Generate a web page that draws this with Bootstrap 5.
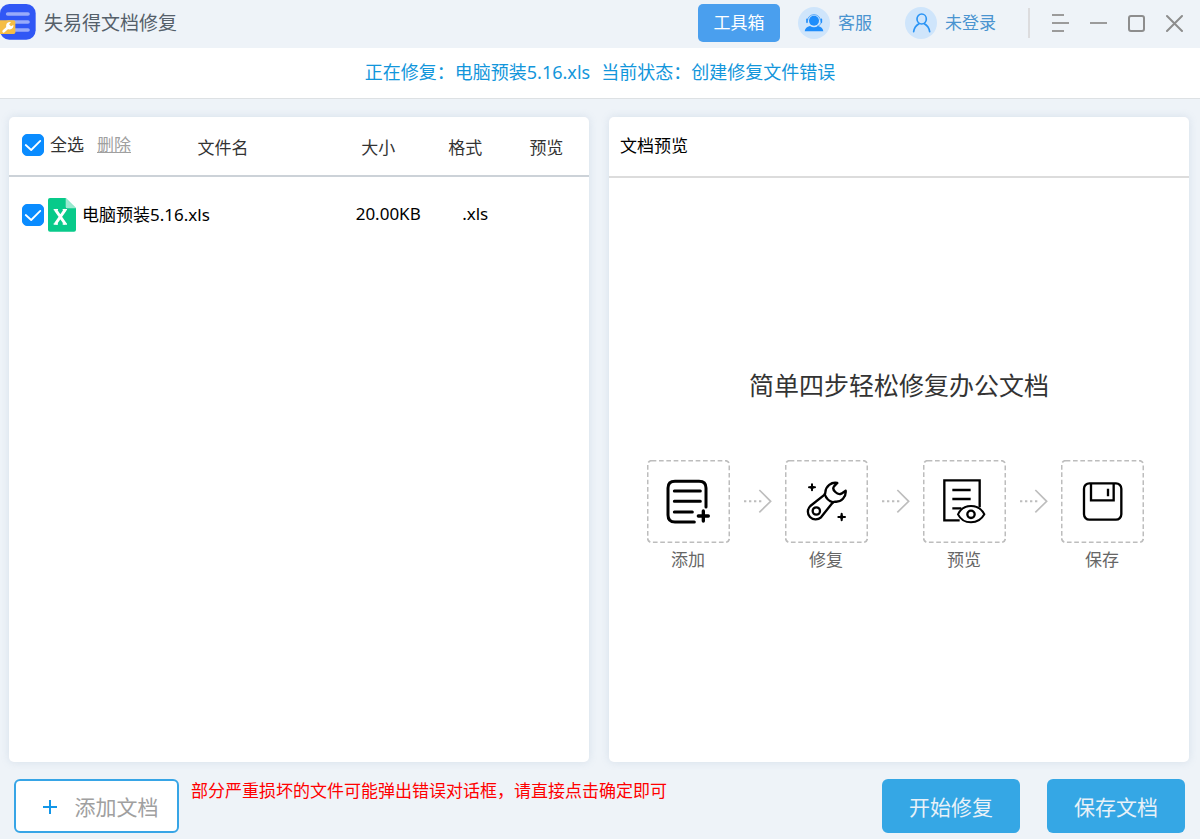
<!DOCTYPE html>
<html lang="zh-CN">
<head>
<meta charset="utf-8">
<meta name="viewport" content="width=device-width, initial-scale=1">
<title>失易得文档修复</title>
<link href="https://cdn.jsdelivr.net/npm/bootstrap@5.3.0/dist/css/bootstrap.min.css" rel="stylesheet">
<style>
  body {
    font-family: "Noto Sans", "Noto Sans CJK SC", sans-serif;
    font-size: 17px;
    line-height: 24px;
    color: #000;
    background: #eef3f8;
  }
  a, a:hover { color: inherit; }
  .title-bar { height: 48px; padding: 0 6px 2px 0; }
  .app-logo { margin-bottom: 2px; }
  .app-name { font-size: 19px; color: #55606a; font-weight: 400; }
  .btn { font-size: 17px; line-height: 24px; }
  .btn-toolbox, .btn-toolbox:hover {
    width: 82px; height: 38px; padding: 0; border: 0; border-radius: 5px;
    background: #4a9fee; color: #fff;
  }
  .bar-link { color: #4a94d0; margin-left: 33px; }
  .btn-toolbox + .bar-link { margin-left: 18px; }
  .bar-link:hover { color: #2a7fc4; }
  .bar-rule { width: 2px; height: 30px; margin: 0 12px 0 32px; background: #dcdcde; }
  .win-btn { width: 38px; height: 38px; padding: 0; border: 0; background: none; line-height: 0; }
  .status-bar { height: 51px; padding-bottom: 2px; gap: 11px; font-size: 18px; color: #1296db; background: #fff; border-bottom: 1px solid #dde1e4; }
  .work-area { padding: 18px 11px 0 9px; gap: 20px; }
  .panel { background: #fff; border-radius: 5px; box-shadow: 0 0 8px rgba(120, 150, 180, .2); flex: 1 1 0; min-width: 0; }
  .file-table { table-layout: fixed; width: 100%; }
  .file-table th { height: 59px; font-weight: 400; color: #333; padding: 3px 4px 0 0; text-align: center; border-bottom: 2px solid #ccd2d8; }
  .file-table th:first-child, .file-table td:first-child { padding: 0 0 3px 13px; text-align: left; }
  .file-table th:nth-child(2) { text-align: left; padding-left: 26px; }
  .file-table td { height: 76px; padding: 0 0 2px 16px; text-align: center; }
  .file-table td:first-child { padding-bottom: 0; }
  .form-check-input.tick { width: 22px; height: 22px; margin: 0; border-radius: 5px; flex: none; }
  .form-check-input.tick:checked { background-color: #0a8cff; border-color: #0a8cff;
    background-image: url("data:image/svg+xml,%3csvg xmlns='http://www.w3.org/2000/svg' viewBox='0 0 22 22'%3e%3cpath fill='none' stroke='%23fff' stroke-width='2' stroke-linecap='round' stroke-linejoin='round' d='M3 11l6 5.500 10-10'/%3e%3c/svg%3e"); }
  .all-label { margin: 0 13px 0 6px; }
  .file-icon { margin-right: 6px; }
  .remove-link, .remove-link:hover { color: #a0a0a0; }
  .panel-head { height: 61px; padding: 0 11px 2px; border-bottom: 2px solid #dcdcdc; }
  .guide { padding-bottom: 3px; }
  .guide-title { font-size: 25px; line-height: 38px; font-weight: 400; color: #333; margin-bottom: 56px; }
  .step-box { width: 83px; height: 83px; }
  .step-arrow { width: 55px; height: 83px; }
  .step-label { color: #666; margin-top: 5px; }
  .steps { padding-right: 8px; }
  .bottom-bar { height: 77px; padding: 0 15px 0 14px; }
  .btn-add, .btn-add:hover {
    width: 165px; height: 54px; padding: 2px 0 0 8px; font-size: 21px; color: #a0a0a0;
    background: #fff; border: 2px solid #37a5e6; border-radius: 6px; gap: 17px;
  }
  .btn-main, .btn-main:hover {
    width: 138px; height: 54px; padding: 2px 0 0; font-size: 21px; color: #e8f1f8;
    background: #35a7e5; border: 0; border-radius: 6px;
  }
  .bottom-bar .btn { margin-top: 11px; }
  .btn-main + .btn-main { margin-left: 27px; }
  .notice { color: #f00; margin: 0 auto 20px 12px; }
</style>
</head>
<body class="d-flex flex-column min-vh-100">

<header class="title-bar d-flex align-items-center flex-shrink-0">
  <svg class="app-logo" width="36" height="36" viewBox="0 0 108 108" aria-hidden="true">
    <rect x="0" y="0" width="107" height="107" rx="28" fill="#3057f5"/>
    <g stroke="#98abfa" stroke-width="11" stroke-linecap="round"><path d="M23 30H84M23 54H84M23 78H84"/></g>
    <rect x="-6" y="49" width="52" height="41" rx="5" fill="#f5bd45"/>
    <path d="M11 82L25 69" stroke="#fff" stroke-width="8" stroke-linecap="round"/>
    <path d="M33 55a11 11 0 1 0 7 8l-7 4-6-6z" fill="#fff"/>
  </svg>
  <h1 class="app-name mb-0 ms-2 me-auto">失易得文档修复</h1>

  <button type="button" class="btn btn-toolbox">工具箱</button>
  <a href="#" class="bar-link d-flex align-items-center gap-2 text-decoration-none">
    <svg width="32" height="32" viewBox="0 0 96 96" aria-hidden="true">
      <circle cx="48" cy="48" r="48" fill="#cfe5fb"/>
      <circle cx="48" cy="41" r="15" fill="#1e8dfb"/>
      <path d="M29 40a19 17 0 0 1 38 0" fill="none" stroke="#1e8dfb" stroke-width="2"/>
      <path d="M27 37v9M70 37v9" stroke="#1e8dfb" stroke-width="5" stroke-linecap="round"/>
      <path d="M69 48q-3 9-12 10" fill="none" stroke="#1e8dfb" stroke-width="2"/>
      <path d="M20 73q2-13 16-16 12 8 24 0 14 3 16 16z" fill="#1e8dfb"/>
    </svg>客服</a>
  <a href="#" class="bar-link d-flex align-items-center gap-2 text-decoration-none">
    <svg width="32" height="32" viewBox="0 0 96 96" aria-hidden="true">
      <circle cx="48" cy="48" r="48" fill="#cfe5fb"/>
      <g fill="none" stroke="#2a94f5" stroke-width="5" stroke-linecap="round"><ellipse cx="50" cy="36" rx="14" ry="15"/><path d="M26 74Q28 58 42 50M74 74Q72 58 58 50"/></g>
    </svg>未登录</a>
  <span class="bar-rule"></span>
  <button type="button" class="win-btn" aria-label="菜单"><svg width="18" height="20" viewBox="0 0 18 20" stroke="#9b9b9b" stroke-width="2"><path d="M0 2h12M0 10h17M0 18h12"/></svg></button>
  <button type="button" class="win-btn" aria-label="最小化"><svg width="18" height="20" viewBox="0 0 18 20" stroke="#9b9b9b" stroke-width="2"><path d="M0 10h17"/></svg></button>
  <button type="button" class="win-btn" aria-label="最大化"><svg width="18" height="20" viewBox="0 0 18 20" fill="none" stroke="#8d8d8d" stroke-width="2"><rect x="1" y="3" width="15" height="15" rx="2"/></svg></button>
  <button type="button" class="win-btn" aria-label="关闭"><svg width="18" height="20" viewBox="0 0 18 20" stroke="#8d8d8d" stroke-width="2" stroke-linecap="round"><path d="M1 3l15 15M16 3L1 18"/></svg></button>
</header>

<div class="status-bar d-flex align-items-center justify-content-center flex-shrink-0" role="status">
  <span>正在修复：电脑预装5.16.xls</span><span>当前状态：创建修复文件错误</span>
</div>

<main class="work-area d-flex flex-grow-1">
  <section class="panel">
    <table class="file-table">
      <colgroup><col style="width:28%"><col style="width:28%"><col style="width:16%"><col style="width:14%"><col style="width:14%"></colgroup>
      <thead>
        <tr>
          <th scope="col">
            <div class="d-flex align-items-center">
              <input class="form-check-input tick" type="checkbox" id="all" checked>
              <label for="all" class="all-label">全选</label>
              <a href="#" class="remove-link">删除</a>
            </div>
          </th>
          <th scope="col">文件名</th><th scope="col">大小</th><th scope="col">格式</th><th scope="col">预览</th>
        </tr>
      </thead>
      <tbody>
        <tr>
          <td colspan="2">
            <div class="d-flex align-items-center">
              <input class="form-check-input tick" type="checkbox" id="file1" checked>
              <label for="file1" class="d-flex align-items-center ms-1">
                <svg class="file-icon" width="28" height="34" viewBox="0 0 84 102" aria-hidden="true">
                  <path d="M6 0H53L84 31V95q0 6-6 6H6q-6 0-6-6V6Q0 0 6 0z" fill="#08ca8a"/>
                  <path d="M53 0L84 31H58q-5 0-5-5z" fill="#9ce9d0"/>
                  <path d="M22 35L52 78M52 35L22 78" stroke="#fff" stroke-width="9"/>
                  <path d="M17 35h13M44 35h13M17 78h13M44 78h13" stroke="#fff" stroke-width="4"/>
                </svg>电脑预装5.16.xls</label>
            </div>
          </td>
          <td>20.00KB</td><td>.xls</td><td></td>
        </tr>
      </tbody>
    </table>
  </section>

  <section class="panel d-flex flex-column">
    <div class="panel-head d-flex align-items-center">文档预览</div>
    <div class="guide flex-grow-1 d-flex flex-column align-items-center justify-content-center">
      <h2 class="guide-title">简单四步轻松修复办公文档</h2>
      <div class="steps d-flex text-center">
        <div>
          <svg class="step-box d-block" viewBox="0 0 249 249" fill="none" stroke="#000" stroke-width="8" stroke-linecap="round" stroke-linejoin="round">
            <rect x="2" y="2" width="245" height="245" rx="12" stroke="#bdbdbd" stroke-width="5" stroke-dasharray="14 8" stroke-linecap="butt"/>
            <path stroke-width="9" d="M142 186H84Q63 186 63 165V84Q63 64 84 64H156Q177 64 177 84V141M82 93H160M82 124H160M82 156H136"/>
            <path stroke-width="10" d="M169 153V183M154 168H184"/>
          </svg>
          <div class="step-label">添加</div>
        </div>
        <svg class="step-arrow" viewBox="0 0 165 249" fill="none" stroke="#bdbdbd" stroke-width="5" aria-hidden="true"><path stroke-width="6" stroke-dasharray="7 8" d="M42 124H95"/><path d="M88 90L122 124L88 157"/></svg>
        <div>
          <svg class="step-box d-block" viewBox="0 0 249 249" fill="none" stroke="#000" stroke-width="7" stroke-linecap="round" stroke-linejoin="round">
            <rect x="2" y="2" width="245" height="245" rx="12" stroke="#bdbdbd" stroke-width="5" stroke-dasharray="14 8" stroke-linecap="butt"/>
            <path d="M157 69C139 65 122 79 121 97Q121 101 119 104L76 138A23 23 0 1 0 108 172L142 129Q145 125 150 125C169 127 184 111 182 92L169 101Q160 105 151 96Q141 87 147 79Z"/>
            <path d="M119 102Q125 122 145 127"/>
            <circle cx="94" cy="153" r="11"/>
            <path stroke-width="6" d="M81 73V91M72 82H90M170 161V181M160 171H180"/>
            <path fill="#000" stroke-width="2" d="M81 74l3 5 5 3-5 3-3 5-3-5-5-3 5-3zM170 162l3 6 6 3-6 3-3 6-3-6-6-3 6-3z"/>
          </svg>
          <div class="step-label">修复</div>
        </div>
        <svg class="step-arrow" viewBox="0 0 165 249" fill="none" stroke="#bdbdbd" stroke-width="5" aria-hidden="true"><path stroke-width="6" stroke-dasharray="7 8" d="M42 124H95"/><path d="M88 90L122 124L88 157"/></svg>
        <div>
          <svg class="step-box d-block" viewBox="0 0 249 249" fill="none" stroke="#000" stroke-width="7">
            <rect x="2" y="2" width="245" height="245" rx="12" stroke="#bdbdbd" stroke-width="5" stroke-dasharray="14 8"/>
            <path d="M110 181H64V61H170V142M88 90H143M88 117H143M88 145H115"/>
            <path fill="#fff" stroke-width="6" d="M105 163Q117 138 144 138Q171 138 184 163Q171 187 144 187Q117 187 105 163Z"/>
            <circle cx="144" cy="163" r="11"/>
          </svg>
          <div class="step-label">预览</div>
        </div>
        <svg class="step-arrow" viewBox="0 0 165 249" fill="none" stroke="#bdbdbd" stroke-width="5" aria-hidden="true"><path stroke-width="6" stroke-dasharray="7 8" d="M42 124H95"/><path d="M88 90L122 124L88 157"/></svg>
        <div>
          <svg class="step-box d-block" viewBox="0 0 249 249" fill="none" stroke="#000" stroke-width="7">
            <rect x="2" y="2" width="245" height="245" rx="12" stroke="#bdbdbd" stroke-width="5" stroke-dasharray="14 8"/>
            <rect x="69" y="70" width="112" height="109" rx="16"/>
            <path d="M90 70V121H158V70M141 86V109"/>
          </svg>
          <div class="step-label">保存</div>
        </div>
      </div>
    </div>
  </section>
</main>

<footer class="bottom-bar d-flex align-items-center flex-shrink-0">
  <button type="button" class="btn btn-add d-flex align-items-center justify-content-center flex-shrink-0">
    <svg width="15" height="15" viewBox="0 0 15 15" stroke="#1296e8" stroke-width="2" aria-hidden="true"><path d="M7 0v14M0 7h14"/></svg>添加文档</button>
  <p class="notice">部分严重损坏的文件可能弹出错误对话框，请直接点击确定即可</p>
  <button type="button" class="btn btn-main flex-shrink-0">开始修复</button>
  <button type="button" class="btn btn-main flex-shrink-0">保存文档</button>
</footer>

<script src="https://cdn.jsdelivr.net/npm/bootstrap@5.3.0/dist/js/bootstrap.bundle.min.js"></script>
</body>
</html>
